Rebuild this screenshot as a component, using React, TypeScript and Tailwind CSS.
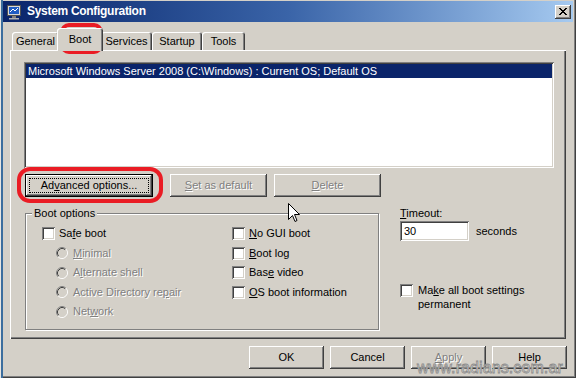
import React from "react";

const raised =
  "shadow-[inset_-1px_-1px_0_#404040,inset_1px_1px_0_#ffffff,inset_-2px_-2px_0_#808080]";
const sunken =
  "shadow-[inset_1px_1px_0_#808080,inset_-1px_-1px_0_#ffffff,inset_2px_2px_0_#404040,inset_-2px_-2px_0_#d4d0c8]";
const disabledText = "text-[#808080] [text-shadow:1px_1px_0_#ffffff]";

function U({ children }: { children: React.ReactNode }) {
  return <span className="underline decoration-1 underline-offset-[1px]">{children}</span>;
}

function Check() {
  return <div className={`w-[13px] h-[13px] shrink-0 bg-white ${sunken}`} />;
}

function Radio() {
  return (
    <svg width="12" height="12" viewBox="0 0 12 12" className="shrink-0">
      <circle cx="6" cy="6" r="5" fill="#d4d0c8" />
      <path d="M2.11 9.89 A5.5 5.5 0 0 1 9.89 2.11" stroke="#808080" fill="none" />
      <path d="M9.89 2.11 A5.5 5.5 0 0 1 2.11 9.89" stroke="#ffffff" fill="none" />
      <path d="M2.82 9.18 A4.5 4.5 0 0 1 9.18 2.82" stroke="#404040" fill="none" />
      <path d="M9.18 2.82 A4.5 4.5 0 0 1 2.82 9.18" stroke="#d4d0c8" fill="none" />
    </svg>
  );
}

function Tab({ label, w, selected }: { label: string; w: string; selected?: boolean }) {
  if (selected) {
    return (
      <div
        className={`${w} h-[23px] -mx-[2px] -mb-[1px] relative z-10 bg-[#d4d0c8] rounded-t-[3px] shadow-[inset_1px_1px_0_#ffffff,inset_-1px_0_0_#404040,inset_-2px_0_0_#808080] flex justify-center pt-[5px]`}
      >
        {label}
      </div>
    );
  }
  return (
    <div
      className={`${w} h-[18px] rounded-t-[3px] shadow-[inset_1px_1px_0_#ffffff,inset_-1px_0_0_#404040,inset_-2px_0_0_#808080] flex justify-center pt-[3px]`}
    >
      {label}
    </div>
  );
}

function CheckRow({ children }: { children: React.ReactNode }) {
  return (
    <div className="h-[19.5px] flex items-center gap-[4px]">
      <Check />
      <span>{children}</span>
    </div>
  );
}

function RadioRow({ children }: { children: React.ReactNode }) {
  return (
    <div className="h-[19.5px] flex items-center gap-[5px] pl-[14px]">
      <Radio />
      <span className={disabledText}>{children}</span>
    </div>
  );
}

export default function App() {
  return (
    <div className="w-[576px] h-[378px] relative overflow-hidden bg-[#d4d0c8] pl-[3px] pt-[1px] flex flex-col font-['Liberation_Sans',Arial,sans-serif] text-[11px] leading-[13px] text-black shadow-[inset_1px_0_0_#e8e6e2,inset_3px_0_0_#3c6e9e,inset_-1px_-1px_0_#404040,inset_-2px_-2px_0_#808080]">
      {/* Title bar */}
      <div className="h-[21px] mr-[3px] flex items-center bg-gradient-to-r from-[#0a246a] via-[#3a64a8] to-[#a6caf0] pl-[3px] pr-[2px]">
        <svg width="16" height="16" viewBox="0 0 16 16" className="shrink-0">
          <rect x="1.5" y="1.5" width="13" height="10" fill="#d8d8d8" stroke="#505050" />
          <rect x="3" y="3" width="10" height="7" fill="#1f5cc4" />
          <path d="M4 8 L7 5 L9 7 L12 4" stroke="#ffffff" fill="none" />
          <rect x="6" y="12" width="4" height="2" fill="#808080" />
          <rect x="3" y="14" width="10" height="1.5" fill="#b0b0b0" />
        </svg>
        <span className="ml-[5px] text-white font-bold text-[12px] tracking-[-0.3px]">System Configuration</span>
        <div className="flex-1" />
        <div className={`w-[16px] h-[14px] bg-[#d4d0c8] ${raised} flex items-center justify-center`}>
          <svg width="8" height="7" viewBox="0 0 8 7" shapeRendering="crispEdges">
            <path d="M0 0h2v1h-2zM6 0h2v1h-2zM1 1h2v1h-2zM5 1h2v1h-2zM2 2h4v1h-4zM3 3h2v1h-2zM2 4h4v1h-4zM1 5h2v1h-2zM5 5h2v1h-2zM0 6h2v1h-2zM6 6h2v1h-2z" fill="#000" />
          </svg>
        </div>
      </div>

      {/* Tab strip */}
      <div className="mt-[6px] ml-[9px] h-[22px] flex items-end">
        <Tab label="General" w="w-[47px]" />
        <Tab label="Boot" w="w-[46px]" selected />
        <Tab label="Services" w="w-[51px]" />
        <Tab label="Startup" w="w-[50px]" />
        <Tab label="Tools" w="w-[43px]" />
      </div>

      {/* Tab panel */}
      <div className="ml-[7px] w-[556px] h-[289px] shadow-[inset_1px_1px_0_#ffffff,inset_-1px_-1px_0_#404040,inset_-2px_-2px_0_#808080] pt-[12px] pl-[14px] flex flex-col">
        <div className={`w-[530px] h-[106px] bg-white ${sunken} p-[2px]`}>
          <div className="h-[14px] bg-[#0a246a] text-white pl-[2px] flex items-center">
            Microsoft Windows Server 2008 (C:\Windows) : Current OS; Default OS
          </div>
        </div>

        <div className="mt-[6px] flex">
          <div className="ml-[1px] w-[128px] h-[23px] bg-[#d4d0c8] shadow-[inset_0_0_0_1px_#000000,inset_-2px_-2px_0_#404040,inset_2px_2px_0_#ffffff,inset_-3px_-3px_0_#808080] p-[4px]">
            <div className="w-full h-full border border-dotted border-black flex items-center justify-center">
              <span>
                Ad<U>v</U>anced options...
              </span>
            </div>
          </div>
          <div className={`ml-[17px] w-[97px] h-[23px] ${raised} flex items-center justify-center ${disabledText}`}>
            <span>
              <U>S</U>et as default
            </span>
          </div>
          <div className={`ml-[7px] w-[107px] h-[23px] ${raised} flex items-center justify-center ${disabledText}`}>
            <span>
              <U>D</U>elete
            </span>
          </div>
        </div>

        <div className="mt-[9px] flex items-start">
          {/* Boot options group */}
          <div className="ml-[1px] w-[354px] pt-[7px]">
            <div className="relative h-[117px] border border-[#808080] shadow-[inset_1px_1px_0_#ffffff,1px_1px_0_#ffffff]">
              <div className="absolute -top-[7px] left-[6px] px-[2px] bg-[#d4d0c8]">Boot options</div>
              <div className="grid grid-cols-[190px_1fr] pt-[10px] pl-[16px]">
                <div className="flex flex-col">
                  <CheckRow>
                    Sa<U>f</U>e boot
                  </CheckRow>
                  <RadioRow>
                    <U>M</U>inimal
                  </RadioRow>
                  <RadioRow>
                    A<U>l</U>ternate shell
                  </RadioRow>
                  <RadioRow>
                    Active Directory re<U>p</U>air
                  </RadioRow>
                  <RadioRow>
                    Net<U>w</U>ork
                  </RadioRow>
                </div>
                <div className="flex flex-col">
                  <CheckRow>
                    <U>N</U>o GUI boot
                  </CheckRow>
                  <CheckRow>
                    <U>B</U>oot log
                  </CheckRow>
                  <CheckRow>
                    Bas<U>e</U> video
                  </CheckRow>
                  <CheckRow>
                    <U>O</U>S boot information
                  </CheckRow>
                </div>
              </div>
            </div>
          </div>

          {/* Right column */}
          <div className="ml-[21px] flex flex-col">
            <div className="h-[14px] flex items-center">
              <span>
                <U>T</U>imeout:
              </span>
            </div>
            <div className="mt-[1px] flex items-center">
              <div className={`w-[69px] h-[20px] bg-white ${sunken} flex items-center pl-[4px]`}>30</div>
              <span className="ml-[7px]">seconds</span>
            </div>
            <div className="mt-[43px] flex items-start gap-[5px]">
              <Check />
              <div className="leading-[14px] -mt-[1px]">
                Ma<U>k</U>e all boot settings
                <br />
                permanent
              </div>
            </div>
          </div>
        </div>
      </div>

      {/* Bottom buttons */}
      <div className="mt-[7px] flex justify-end gap-[6px] pr-[9px]">
        <div className={`w-[75px] h-[23px] ${raised} flex items-center justify-center`}>OK</div>
        <div className={`w-[75px] h-[23px] ${raised} flex items-center justify-center`}>Cancel</div>
        <div className={`w-[75px] h-[23px] ${raised} flex items-center justify-center ${disabledText}`}>
          <span>
            <U>A</U>pply
          </span>
        </div>
        <div className={`w-[75px] h-[23px] ${raised} flex items-center justify-center`}>Help</div>
      </div>

      {/* Red highlight marks */}
      <div className="absolute left-[60px] top-[23px] w-[43px] h-[31px] border-[4px] border-[#ea1c24] rounded-[9px] pointer-events-none" />
      <div className="absolute left-[17px] top-[167px] w-[146px] h-[36px] border-[4px] border-[#ea1c24] rounded-[13px] pointer-events-none" />

      {/* Mouse cursor */}
      <svg width="12" height="20" viewBox="0 0 12 20" className="absolute left-[288px] top-[203px]">
        <path d="M0.5 0.5 V16.5 L4.5 12.5 L7 18.5 L9 17.5 L6.5 11.5 H11.5 Z" fill="#ffffff" stroke="#000000" />
      </svg>

      {/* Watermark */}
      <div className="absolute left-[417px] top-[359px] text-[16px] leading-[18px] font-['Liberation_Sans',Arial,sans-serif] text-[#e4e2de] [-webkit-text-stroke:0.8px_#8a8a8a] tracking-[0.1px] pointer-events-none">
        www.radians.com.ar
      </div>
    </div>
  );
}
